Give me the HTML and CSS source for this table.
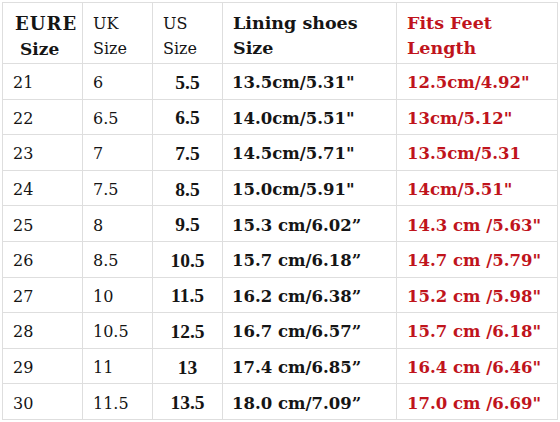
FILE: index.html
```html
<!DOCTYPE html>
<html>
<head>
<meta charset="utf-8">
<link rel="stylesheet" href="styles.css">
</head>
<body>
<table class="chart">
  <colgroup>
    <col class="c1"><col class="c2"><col class="c3"><col class="c4"><col class="c5">
  </colgroup>
  <thead>
    <tr>
      <th class="h-eu"><span class="eu1">EURE</span><br><span class="eu2">Size</span></th>
      <th class="h-reg">UK<br>Size</th>
      <th class="h-reg">US<br>Size</th>
      <th class="h-bold">Lining shoes<br>Size</th>
      <th class="h-bold red">Fits Feet<br>Length</th>
    </tr>
  </thead>
  <tbody>
    <tr><td class="eu">21</td><td class="uk">6</td><td class="us">5.5</td><td class="lin">13.5cm/5.31"</td><td class="fit">12.5cm/4.92"</td></tr>
    <tr><td class="eu">22</td><td class="uk">6.5</td><td class="us">6.5</td><td class="lin">14.0cm/5.51"</td><td class="fit">13cm/5.12"</td></tr>
    <tr><td class="eu">23</td><td class="uk">7</td><td class="us">7.5</td><td class="lin">14.5cm/5.71"</td><td class="fit">13.5cm/5.31</td></tr>
    <tr><td class="eu">24</td><td class="uk">7.5</td><td class="us">8.5</td><td class="lin">15.0cm/5.91"</td><td class="fit">14cm/5.51"</td></tr>
    <tr><td class="eu">25</td><td class="uk">8</td><td class="us">9.5</td><td class="lin">15.3 cm/6.02”</td><td class="fit">14.3 cm /5.63"</td></tr>
    <tr><td class="eu">26</td><td class="uk">8.5</td><td class="us">10.5</td><td class="lin">15.7 cm/6.18”</td><td class="fit">14.7 cm /5.79"</td></tr>
    <tr><td class="eu">27</td><td class="uk">10</td><td class="us">11.5</td><td class="lin">16.2 cm/6.38”</td><td class="fit">15.2 cm /5.98"</td></tr>
    <tr><td class="eu">28</td><td class="uk">10.5</td><td class="us">12.5</td><td class="lin">16.7 cm/6.57”</td><td class="fit">15.7 cm /6.18"</td></tr>
    <tr><td class="eu">29</td><td class="uk">11</td><td class="us">13</td><td class="lin">17.4 cm/6.85”</td><td class="fit">16.4 cm /6.46"</td></tr>
    <tr><td class="eu">30</td><td class="uk">11.5</td><td class="us">13.5</td><td class="lin">18.0 cm/7.09”</td><td class="fit">17.0 cm /6.69"</td></tr>
  </tbody>
</table>
</body>
</html>
```

FILE: styles.css
```css
html, body {
  margin: 0;
  padding: 0;
  background: #ffffff;
}
body {
  padding: 2px 0 0 2px;
  font-family: "DejaVu Serif", "Liberation Serif", serif;
  color: #151515;
}
.chart {
  border-collapse: collapse;
  table-layout: fixed;
  width: 555px;
}
.c1 { width: 80px; }
.c2 { width: 70px; }
.c3 { width: 70px; }
.c4 { width: 174px; }
.c5 { width: 161px; }

.chart th, .chart td {
  border: 1px solid #dedede;
  text-align: left;
}
.chart thead tr { height: 61px; }
.chart tbody tr { height: 35.6px; }

.chart th {
  vertical-align: top;
  padding: 8px 0 0 10px;
  line-height: 25px;
}
.chart th.h-eu {
  font-weight: bold;
  font-size: 18px;
  padding-left: 12px;
}
.eu1 { letter-spacing: 1px; }
.eu2 { padding-left: 5px; font-size: 17px; }
.chart th.h-reg {
  font-weight: normal;
  font-size: 16px;
}
.chart th.h-bold {
  font-weight: bold;
  font-size: 17.5px;
}
.red { color: #c0141c; }

.chart td {
  vertical-align: middle;
  padding: 3px 0 0 10px;
}
.chart td.eu, .chart td.uk {
  font-size: 16px;
}
.chart td.us {
  font-family: "Liberation Serif", serif;
  font-weight: bold;
  font-size: 19.5px;
  text-align: center;
  padding-left: 0;
}
.chart td.lin {
  font-weight: bold;
  font-size: 16.5px;
  padding-left: 9px;
}
.chart td.fit {
  font-weight: bold;
  font-size: 16.5px;
  color: #c0141c;
  padding-left: 10px;
}
```
